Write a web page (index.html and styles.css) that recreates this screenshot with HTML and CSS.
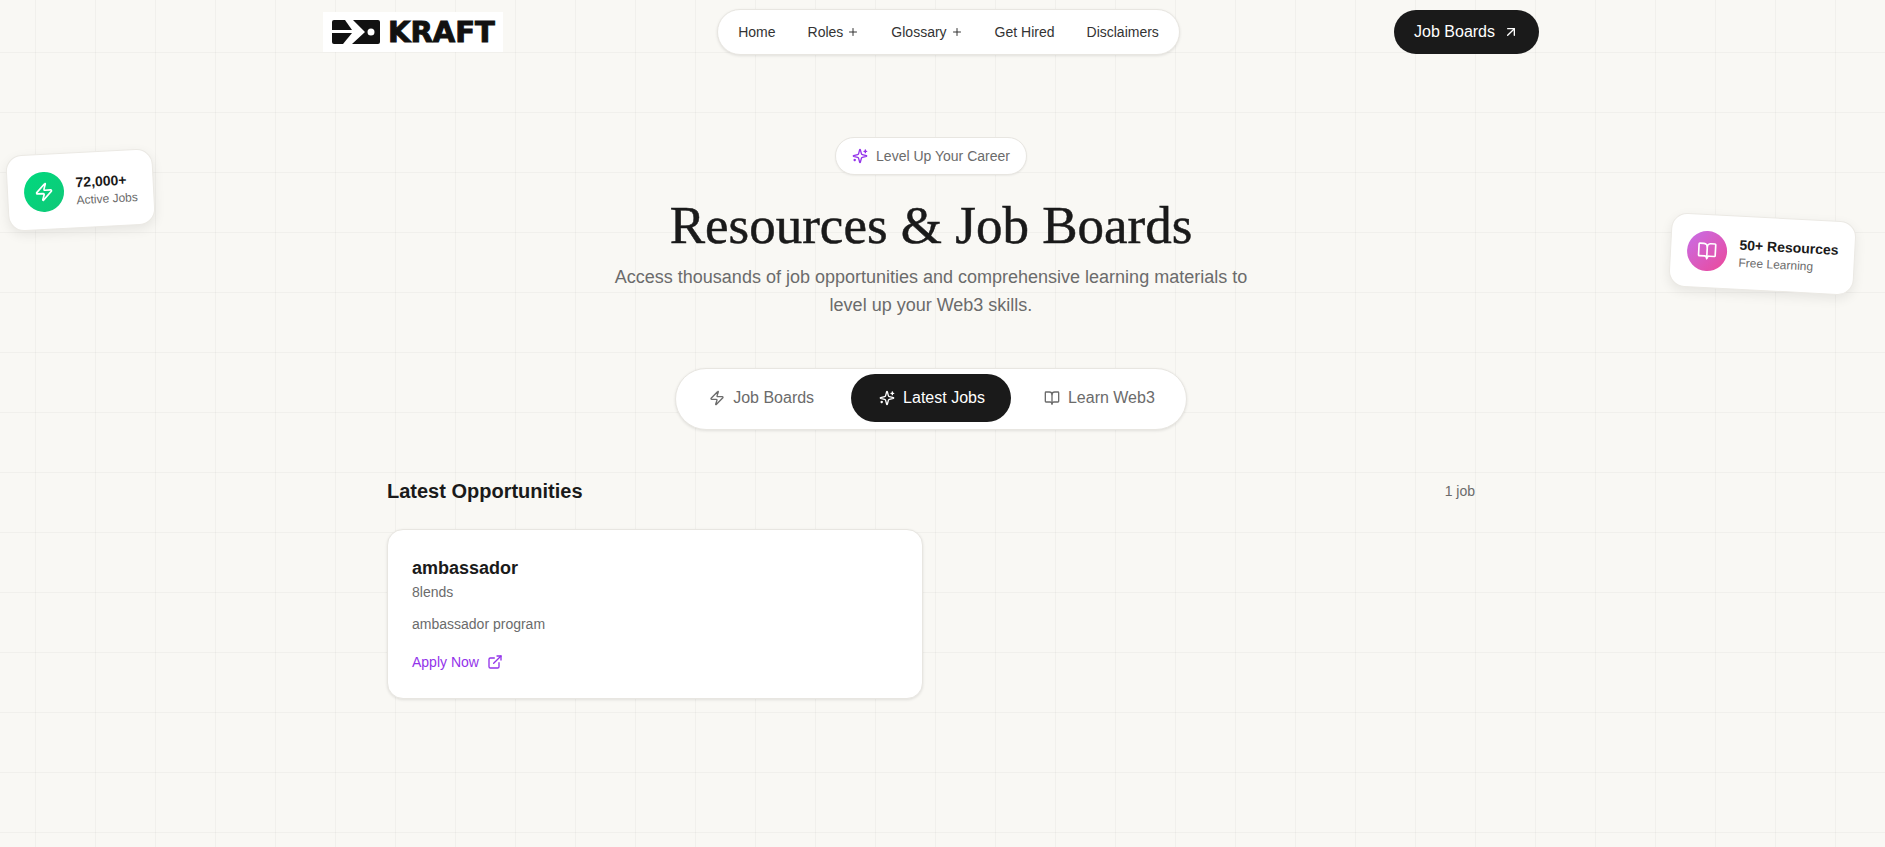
FILE: index.html
```html
<!DOCTYPE html>
<html lang="en">
<head>
  <meta charset="UTF-8">
  <meta name="viewport" content="width=device-width, initial-scale=1.0">
  <title>Resources &amp; Job Boards</title>
  <link rel="stylesheet" href="styles.css">
</head>
<body>
  <div class="float-card float-left">
    <span class="float-icon green">
      <svg class="icon i20" viewBox="0 0 24 24"><path d="M4 14a1 1 0 0 1-.78-1.63l9.9-10.2a.5.5 0 0 1 .86.46l-1.92 6.02A1 1 0 0 0 13 10h7a1 1 0 0 1 .78 1.63l-9.9 10.2a.5.5 0 0 1-.86-.46l1.92-6.02A1 1 0 0 0 11 14z"/></svg>
    </span>
    <div>
      <div class="float-title">72,000+</div>
      <div class="float-sub">Active Jobs</div>
    </div>
  </div>
  <div class="float-card float-right">
    <span class="float-icon pink">
      <svg class="icon i20" viewBox="0 0 24 24"><path d="M12 7v14"/><path d="M3 18a1 1 0 0 1-1-1V4a1 1 0 0 1 1-1h5a4 4 0 0 1 4 4 4 4 0 0 1 4-4h5a1 1 0 0 1 1 1v13a1 1 0 0 1-1 1h-6a3 3 0 0 0-3 3 3 3 0 0 0-3-3z"/></svg>
    </span>
    <div>
      <div class="float-title">50+ Resources</div>
      <div class="float-sub">Free Learning</div>
    </div>
  </div>

  <header class="header">
    <a class="logo" href="#">
      <svg class="logo-mark" viewBox="0 0 48 24">
        <path d="M2 0h11l7 10H0V2a2 2 0 0 1 2-2z"/>
        <path d="M0 13h20L11 24H2a2 2 0 0 1-2-2z"/>
        <path fill-rule="evenodd" d="M21 0h25a2 2 0 0 1 2 2v20a2 2 0 0 1-2 2H20l13-12zM39 8.500a3.500 3.500 0 1 0 0 7 3.500 3.500 0 0 0 0-7z"/>
      </svg>
      <span class="logo-text">KRAFT</span>
    </a>
    <nav class="nav">
      <a href="#">Home</a>
      <a href="#">Roles <svg class="icon i12" viewBox="0 0 24 24"><path d="M5 12h14"/><path d="M12 5v14"/></svg></a>
      <a href="#">Glossary <svg class="icon i12" viewBox="0 0 24 24"><path d="M5 12h14"/><path d="M12 5v14"/></svg></a>
      <a href="#">Get Hired</a>
      <a href="#">Disclaimers</a>
    </nav>
    <a class="cta" href="#">Job Boards <svg class="icon i16" viewBox="0 0 24 24"><path d="M7 7h10v10"/><path d="M7 17 17 7"/></svg></a>
  </header>

  <section class="hero">
    <div class="badge">
      <svg class="icon i16 purple" viewBox="0 0 24 24"><path d="M9.937 15.500A2 2 0 0 0 8.500 14.063l-6.135-1.582a.5.5 0 0 1 0-.962L8.500 9.936A2 2 0 0 0 9.937 8.500l1.582-6.135a.5.5 0 0 1 .963 0L14.063 8.500A2 2 0 0 0 15.500 9.937l6.135 1.581a.5.5 0 0 1 0 .964L15.500 14.063a2 2 0 0 0-1.437 1.437l-1.582 6.135a.5.5 0 0 1-.963 0z"/><path d="M20 3v4"/><path d="M22 5h-4"/><path d="M4 17v2"/><path d="M5 18H3"/></svg>
      Level Up Your Career
    </div>
    <h1>Resources &amp; Job Boards</h1>
    <p class="lead">Access thousands of job opportunities and comprehensive learning materials to level up your Web3 skills.</p>

    <div class="tabs">
      <button class="tab">
        <svg class="icon i16" viewBox="0 0 24 24"><path d="M4 14a1 1 0 0 1-.78-1.630l9.900-10.200a.5.5 0 0 1 .86.46l-1.920 6.020A1 1 0 0 0 13 10h7a1 1 0 0 1 .78 1.630l-9.900 10.200a.5.5 0 0 1-.86-.46l1.920-6.020A1 1 0 0 0 11 14z"/></svg>
        Job Boards
      </button>
      <button class="tab active">
        <svg class="icon i16" viewBox="0 0 24 24"><path d="M9.937 15.500A2 2 0 0 0 8.500 14.063l-6.135-1.582a.5.5 0 0 1 0-.962L8.500 9.936A2 2 0 0 0 9.937 8.500l1.582-6.135a.5.5 0 0 1 .963 0L14.063 8.500A2 2 0 0 0 15.500 9.937l6.135 1.581a.5.5 0 0 1 0 .964L15.500 14.063a2 2 0 0 0-1.437 1.437l-1.582 6.135a.5.5 0 0 1-.963 0z"/><path d="M20 3v4"/><path d="M22 5h-4"/><path d="M4 17v2"/><path d="M5 18H3"/></svg>
        Latest Jobs
      </button>
      <button class="tab">
        <svg class="icon i16" viewBox="0 0 24 24"><path d="M12 7v14"/><path d="M3 18a1 1 0 0 1-1-1V4a1 1 0 0 1 1-1h5a4 4 0 0 1 4 4 4 4 0 0 1 4-4h5a1 1 0 0 1 1 1v13a1 1 0 0 1-1 1h-6a3 3 0 0 0-3 3 3 3 0 0 0-3-3z"/></svg>
        Learn Web3
      </button>
    </div>
  </section>

  <main class="jobs">
    <div class="jobs-head">
      <h2>Latest Opportunities</h2>
      <span class="jobs-count">1 job</span>
    </div>
    <div class="jobs-grid">
      <article class="job-card">
        <h3>ambassador</h3>
        <div class="company">8lends</div>
        <p class="desc">ambassador program</p>
        <a class="apply" href="#">Apply Now <svg class="icon i16" viewBox="0 0 24 24"><path d="M15 3h6v6"/><path d="M10 14 21 3"/><path d="M18 13v6a2 2 0 0 1-2 2H5a2 2 0 0 1-2-2V8a2 2 0 0 1 2-2h6"/></svg></a>
      </article>
    </div>
  </main>
</body>
</html>
```

FILE: styles.css
```css
* { box-sizing: border-box; }

html, body { height: 100%; }

body {
  margin: 0;
  padding-right: 23px;
  position: relative;
  overflow: hidden;
  font-family: "Liberation Sans", Arial, sans-serif;
  color: #1a1a1a;
  background-color: #f9f8f4;
  background-image:
    linear-gradient(rgba(0,0,0,0.03) 1px, transparent 1px),
    linear-gradient(90deg, rgba(0,0,0,0.03) 1px, transparent 1px);
  background-size: 60px 60px;
  background-position: 35px 52px;
}

a { color: inherit; text-decoration: none; }

.icon {
  fill: none;
  stroke: currentColor;
  stroke-width: 2;
  stroke-linecap: round;
  stroke-linejoin: round;
  flex-shrink: 0;
}
.i12 { width: 12px; height: 12px; }
.i16 { width: 16px; height: 16px; }
.i20 { width: 20px; height: 20px; }
.purple { color: #9333ea; }

/* header */
.header {
  width: 1216px;
  margin: 0 auto;
  padding-top: 9px;
  display: flex;
  justify-content: space-between;
  align-items: flex-start;
}
.logo {
  width: 180px;
  height: 40px;
  margin-top: 3px;
  padding: 8px 0 0 9px;
  background: #fff;
  display: flex;
  gap: 8px;
}
.logo-mark { width: 48px; height: 24px; fill: #111; }
.logo-text {
  font-family: "DejaVu Sans", sans-serif;
  font-weight: 700;
  font-size: 29px;
  line-height: 25px;
  color: #111;
  -webkit-text-stroke: 1px #111;
}
.nav {
  height: 46px;
  padding: 0 20px;
  display: flex;
  align-items: center;
  gap: 32px;
  background: #fff;
  border: 1px solid #e8e6e1;
  border-radius: 23px;
  box-shadow: 0 1px 3px rgba(0,0,0,0.1);
  font-size: 14px;
  color: #333;
}
.nav a { display: flex; align-items: center; gap: 4px; }
.cta {
  height: 44px;
  margin-top: 1px;
  padding: 0 20px;
  display: flex;
  align-items: center;
  gap: 8px;
  border-radius: 22px;
  background: #1a1a1a;
  color: #fff;
  font-size: 16px;
}

/* hero */
.hero {
  padding-top: 82px;
  display: flex;
  flex-direction: column;
  align-items: center;
  text-align: center;
}
.badge {
  height: 38px;
  padding: 0 16px;
  display: flex;
  align-items: center;
  gap: 8px;
  background: #fff;
  border: 1px solid #e8e6e1;
  border-radius: 19px;
  box-shadow: 0 1px 2px rgba(0,0,0,0.06);
  font-size: 14px;
  color: #6b6b6b;
}
h1 {
  margin: 20px 0 0;
  font-family: "Liberation Serif", serif;
  font-weight: 400;
  font-size: 53px;
  line-height: 60px;
  color: #1a1a1a;
  -webkit-text-stroke: 0.5px #1a1a1a;
}
.lead {
  width: 672px;
  margin: 8px 0 0;
  font-size: 18px;
  line-height: 28px;
  color: #6b6b6b;
}
.tabs {
  margin-top: 49px;
  height: 62px;
  padding: 5px;
  display: flex;
  gap: 8px;
  background: #fff;
  border: 1px solid #e8e6e1;
  border-radius: 31px;
  box-shadow: 0 1px 3px rgba(0,0,0,0.1);
}
.tab {
  height: 48px;
  padding: 0 26px 0 28px;
  display: flex;
  align-items: center;
  gap: 8px;
  border: none;
  border-radius: 24px;
  background: none;
  font-family: inherit;
  font-size: 16px;
  color: #6b6b6b;
}
.tab.active { margin: 0 -3px 0 3px; background: #1a1a1a; color: #fff; }

/* jobs */
.jobs {
  width: 1088px;
  margin: 47px auto 0;
}
.jobs-head {
  display: flex;
  justify-content: space-between;
  align-items: center;
  margin-bottom: 24px;
}
h2 { margin: 0; font-size: 20px; line-height: 28px; color: #1a1a1a; }
.jobs-count { font-size: 14px; color: #6b6b6b; }
.jobs-grid {
  display: grid;
  grid-template-columns: repeat(2, 1fr);
  gap: 16px;
}
.job-card {
  height: 170px;
  padding: 24px;
  background: #fff;
  border: 1px solid #e8e6e1;
  border-radius: 16px;
  box-shadow: 0 1px 3px rgba(0,0,0,0.1);
}
.job-card h3 { margin: 2px 0 0; font-size: 18px; line-height: 24px; color: #1a1a1a; }
.company { margin-top: 2px; font-size: 14px; line-height: 20px; color: #6b6b6b; }
.desc { margin: 12px 0 0; font-size: 14px; line-height: 20px; color: #6b6b6b; }
.apply {
  margin-top: 18px;
  display: flex;
  align-items: center;
  gap: 8px;
  font-size: 14px;
  line-height: 20px;
  color: #9333ea;
}

/* floating stat cards */
.float-card {
  position: absolute;
  display: flex;
  align-items: center;
  gap: 12px;
  padding: 16px;
  background: #fff;
  border: 1px solid #ebe9e4;
  border-radius: 16px;
  box-shadow: 0 4px 12px rgba(0,0,0,0.08);
}
.float-left { left: 7px; top: 152px; padding-block: 17px; transform: rotate(-3deg); }
.float-right { left: 1670px; top: 217px; transform: rotate(3deg); }
.float-icon {
  width: 40px;
  height: 40px;
  border-radius: 50%;
  display: flex;
  align-items: center;
  justify-content: center;
  color: #fff;
}
.green { background: linear-gradient(135deg, #00d97e, #10c878); }
.pink { background: linear-gradient(135deg, #c76ee8, #ec4899); }
.float-title { font-size: 14px; line-height: 20px; font-weight: 700; color: #1a1a1a; }
.float-sub { font-size: 12px; line-height: 16px; color: #6b6b6b; }
```
